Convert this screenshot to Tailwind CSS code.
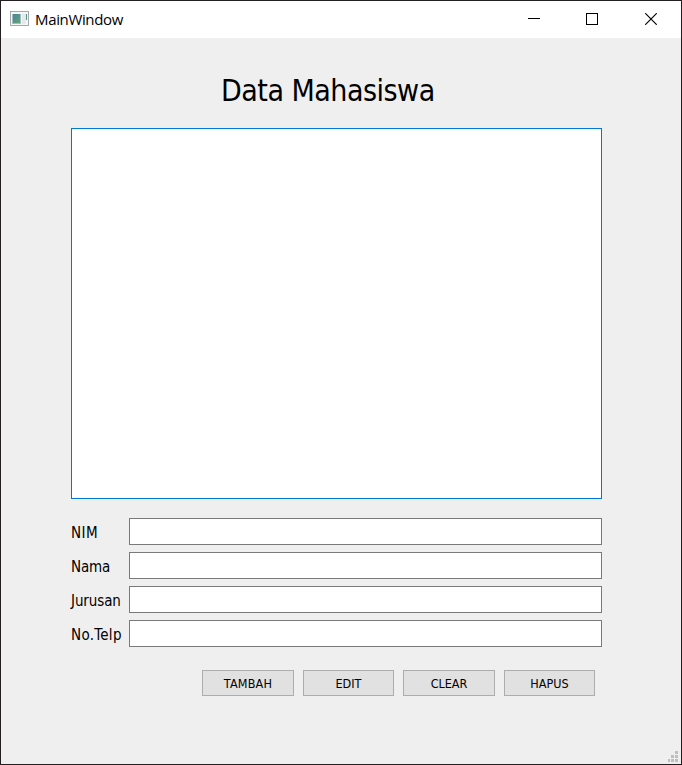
<!DOCTYPE html>
<html lang="id">
<head>
<meta charset="utf-8">
<title>MainWindow</title>
<script src="https://cdn.jsdelivr.net/npm/@tailwindcss/browser@4"></script>
</head>
<body class="overflow-hidden bg-white">
<div class="flex h-[765px] w-[682px] flex-col border border-[#231f21] bg-[#efefef] font-['DejaVu_Sans_Condensed','DejaVu_Sans',sans-serif] font-stretch-condensed text-black">
  <header class="flex h-[37px] shrink-0 items-center bg-white pb-px pl-[9px]">
    <svg class="h-4 w-[19px] shrink-0" viewBox="0 0 19 16" shape-rendering="crispEdges">
      <defs>
        <linearGradient id="pane" x1="0" y1="0" x2="1" y2="1"><stop offset="0" stop-color="#4d83a5"/><stop offset="1" stop-color="#5fa66e"/></linearGradient>
      </defs>
      <rect x=".5" y=".5" width="18" height="14" fill="#f4f6f7" stroke="#a3a9ad"/>
      <rect x="2" y="3" width="9" height="10" fill="#a2bdbd"/>
      <rect x="3" y="3" width="7" height="9" fill="url(#pane)"/>
      <rect x="12" y="3" width="4" height="10" fill="#e5e9eb"/>
      <rect x="16" y="3" width="1" height="6" fill="url(#pane)"/>
    </svg>
    <span class="ml-[6px] w-[100px] whitespace-nowrap font-['Open_Sans',sans-serif] text-[15px] leading-5 tracking-[-0.35px] font-stretch-normal">MainWindow</span>
    <div class="ml-auto flex items-center gap-[46px] pr-[24px]">
      <svg class="size-3" viewBox="0 0 12 12" shape-rendering="crispEdges"><path d="M0 5.5h12" stroke="#000"/></svg>
      <svg class="size-3" viewBox="0 0 12 12" shape-rendering="crispEdges"><path d="M.5.5h11v11H.5z" fill="none" stroke="#000"/></svg>
      <svg class="ml-px size-3" viewBox="0 0 12 12"><path d="M.2.2l11.6 11.6M11.8.2L.2 11.8" stroke="#000" stroke-width="1.15"/></svg>
    </div>
  </header>
  <main class="relative flex-1 pl-[70px]">
    <h1 class="ml-[150px] h-[89px] whitespace-nowrap pt-[34px] text-[30px] leading-[38px] tracking-[-0.5px]">Data Mahasiswa</h1>
    <div class="mt-px h-[371px] w-[531px] border border-[#0078d7] bg-white"></div>
    <form class="mt-[19px] grid w-[531px] grid-cols-[58px_473px] gap-y-[7px] text-[15px]">
      <label for="nim" class="h-[27px] pt-[2px] leading-[27px]"><span class="tracking-[0.5px]">NIM</span></label>
      <input id="nim" class="h-[27px] border border-[#7a7a7a] bg-white px-1 outline-none">
      <label for="nama" class="h-[27px] pt-[2px] leading-[27px]"><span class="tracking-[-0.2px]">Nama</span></label>
      <input id="nama" class="h-[27px] border border-[#7a7a7a] bg-white px-1 outline-none">
      <label for="jurusan" class="h-[27px] pt-[2px] leading-[27px]"><span class="tracking-[-0.1px]">Jurusan</span></label>
      <input id="jurusan" class="h-[27px] border border-[#7a7a7a] bg-white px-1 outline-none">
      <label for="telp" class="h-[27px] pt-[2px] leading-[27px]"><span class="tracking-[0.3px]">No.Telp</span></label>
      <input id="telp" class="h-[27px] border border-[#7a7a7a] bg-white px-1 outline-none">
    </form>
    <div class="mt-[23px] ml-[131px] flex text-[12.5px] leading-[25px]">
      <button class="mr-[9px] h-[26px] w-[92px] border border-[#adadad] bg-[#e1e1e1] tracking-[0.2px]">TAMBAH</button>
      <button class="mr-[9px] h-[26px] w-[91px] border border-[#adadad] bg-[#e1e1e1]">EDIT</button>
      <button class="mr-[9px] h-[26px] w-[92px] border border-[#adadad] bg-[#e1e1e1]">CLEAR</button>
      <button class="h-[26px] w-[91px] border border-[#adadad] bg-[#e1e1e1]">HAPUS</button>
    </div>
    <svg class="absolute right-[3px] bottom-[2px] h-[11px] w-[10px]" viewBox="0 0 10 11" fill="#bfbfbf" shape-rendering="crispEdges">
      <path d="M7 0h3v3H7zM3 4h3v3H3zM7 4h3v3H7zM0 8h2v3H0zM3 8h3v3H3zM7 8h3v3H7z"/>
    </svg>
  </main>
</div>
</body>
</html>
